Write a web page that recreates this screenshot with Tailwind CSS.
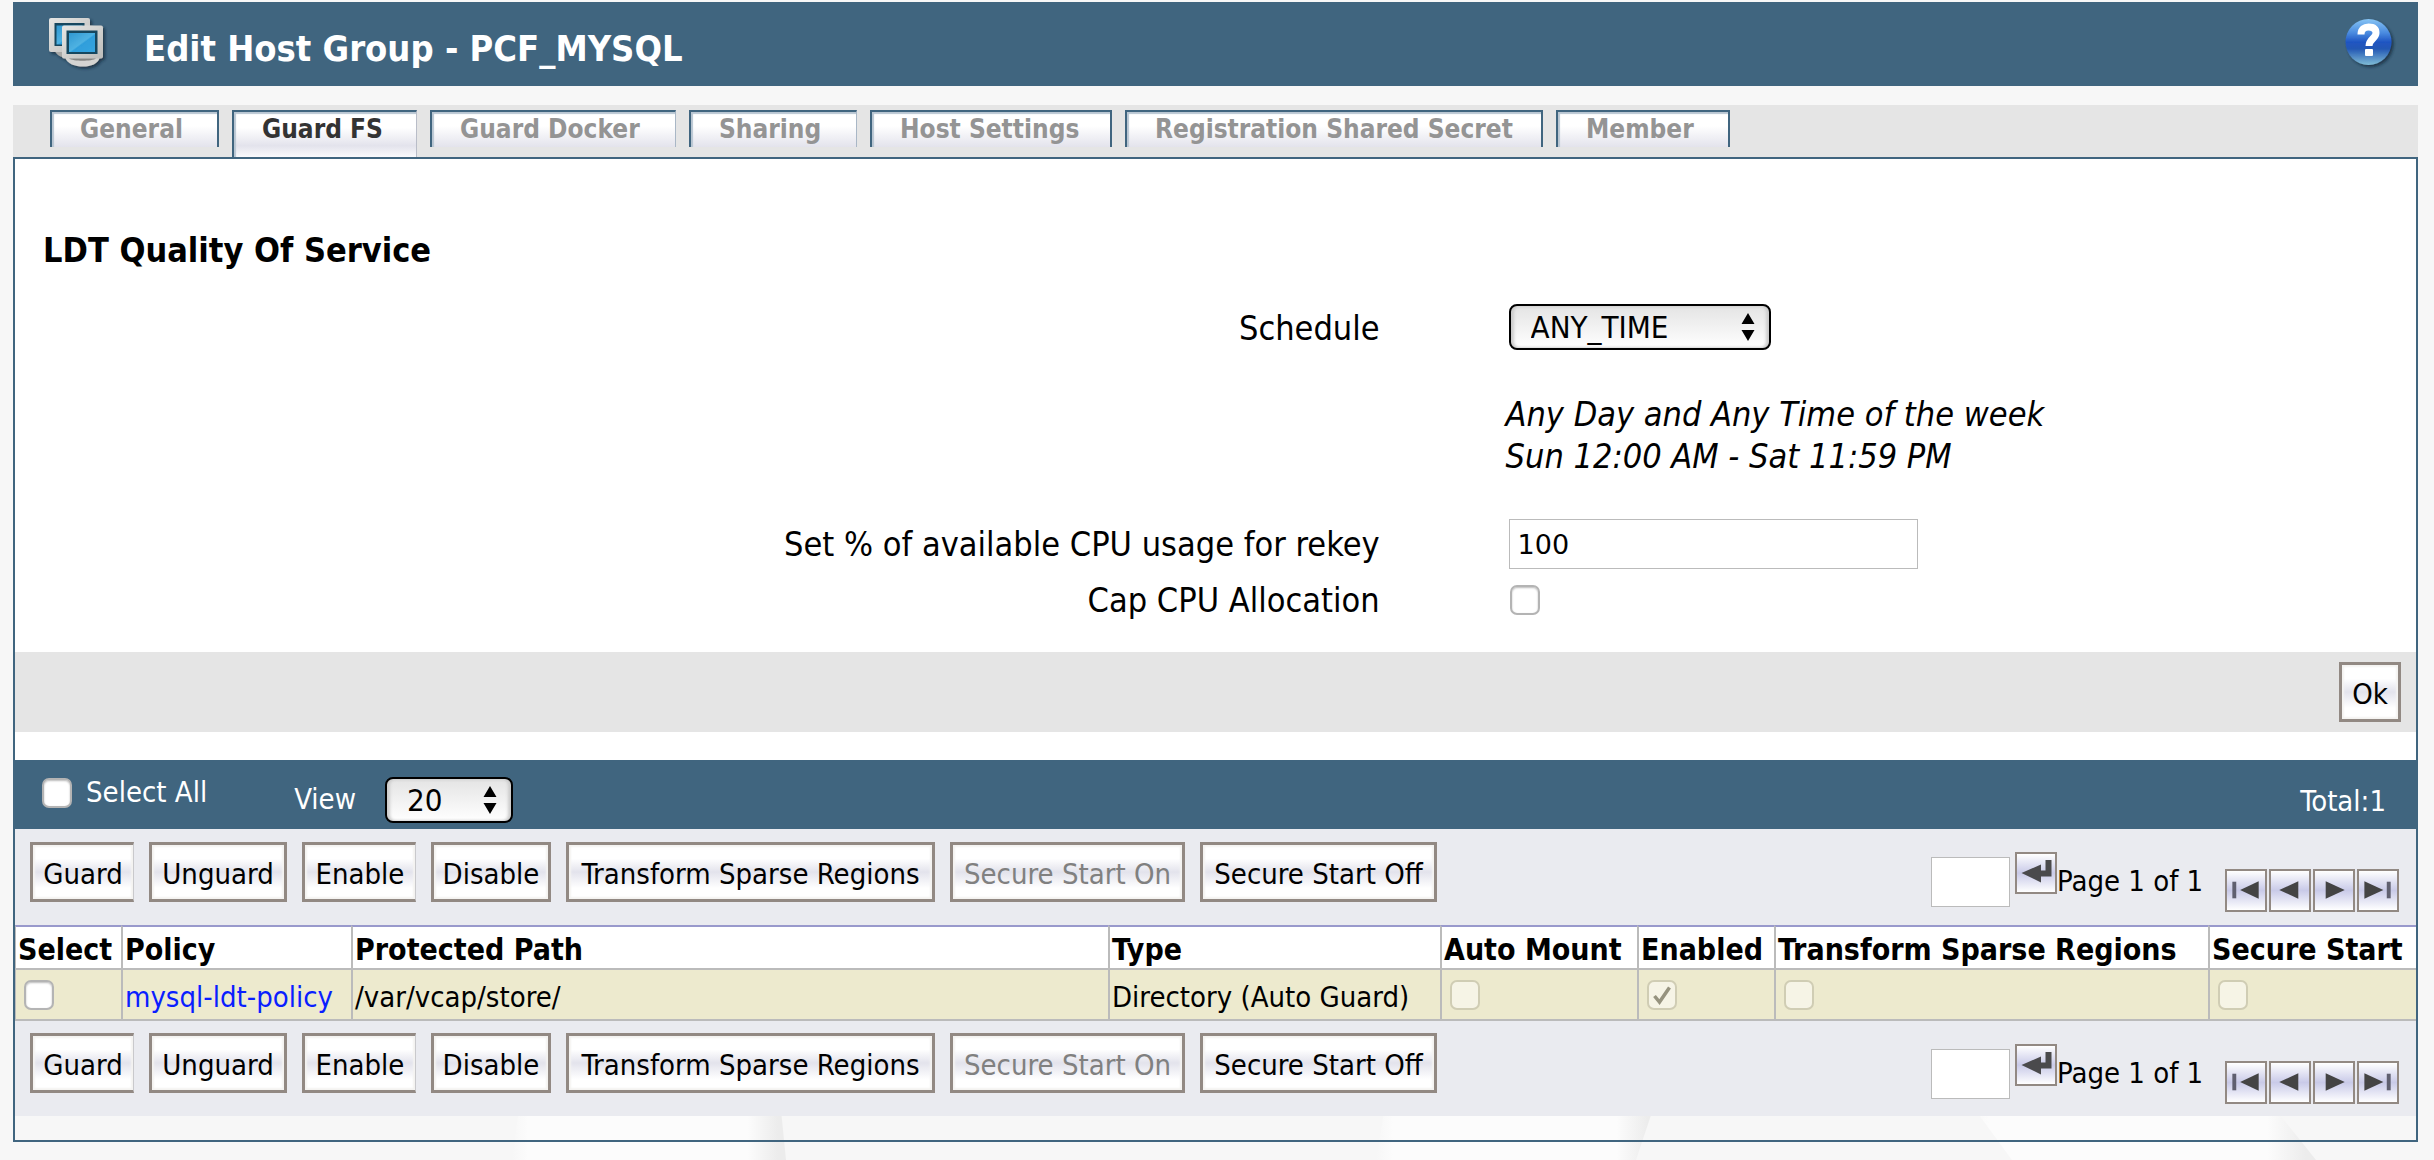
<!DOCTYPE html>
<html lang="en">
<head>
<meta charset="utf-8">
<title>Edit Host Group - PCF_MYSQL</title>
<script src="https://cdn.jsdelivr.net/npm/@tailwindcss/browser@4"></script>
</head>
<body class="relative min-h-screen overflow-x-hidden bg-[#f7f7f7] pt-[2px] pl-[13px] pr-4 font-['DejaVu_Sans_Condensed','DejaVu_Sans',sans-serif] text-[29px] text-black">

<!-- faint page backdrop -->
<svg class="absolute inset-x-0 top-0 -z-10 h-[1160px] w-full" viewBox="0 0 2434 1160" preserveAspectRatio="none" aria-hidden="true">
  <defs>
    <linearGradient id="sweep"><stop offset="0" stop-color="#f7f7f7"/><stop offset=".06" stop-color="#fcfcfc"/><stop offset=".86" stop-color="#fcfcfc"/><stop offset=".97" stop-color="#ececec"/><stop offset="1" stop-color="#ececec"/></linearGradient>
  </defs>
  <path d="M520 1100H780L786 1160H512Z" fill="url(#sweep)"/>
  <path d="M1386 1100H1656L1636 1160H1376Z" fill="url(#sweep)"/>
  <path d="M1968 1100H2268L2316 1160H2012Z" fill="url(#sweep)"/>
</svg>

<!-- shared icon shapes -->
<svg class="hidden" aria-hidden="true">
  <defs>
    <symbol id="i-enter" viewBox="0 0 38 38"><path d="M28.500 6H34.500V22.500H24V28.500L4.500 19L24 10.500V16.500H28.500Z" fill="#4a4a4c"/></symbol>
    <symbol id="i-first" viewBox="0 0 38 40"><path d="M5 11H9V28H5Z" fill="#606070"/><path d="M32 10.500V28.500L13 19.500Z" fill="#444"/></symbol>
    <symbol id="i-prev" viewBox="0 0 38 40"><path d="M27.500 10.500V28.500L8 19.500Z" fill="#444"/></symbol>
    <symbol id="i-next" viewBox="0 0 38 40"><path d="M10.500 10.500V28.500L30 19.500Z" fill="#444"/></symbol>
    <symbol id="i-last" viewBox="0 0 38 40"><path d="M5 10.500V28.500L24.500 19.500Z" fill="#444"/><path d="M28 11H32V28H28Z" fill="#606070"/></symbol>
    <symbol id="i-updown" viewBox="0 0 14 28"><path d="M7 0L13.500 11H.5ZM7 28L.5 17H13.500Z" fill="#000"/></symbol>
  </defs>
</svg>

<header class="flex h-[84px] items-start bg-[#40657f] text-white">
  <svg class="ml-[34px] mt-[13px] h-[60px] w-[64px] shrink-0" viewBox="0 0 64 60" aria-hidden="true">
    <defs>
      <linearGradient id="case" x1="0" y1="0" x2="1" y2="1"><stop offset="0" stop-color="#e6e6e4"/><stop offset="1" stop-color="#bcbcba"/></linearGradient>
      <linearGradient id="glass" x1="0" y1="0" x2="1" y2="1"><stop offset="0" stop-color="#2f98d2"/><stop offset=".5" stop-color="#4fb2e2"/><stop offset=".55" stop-color="#2f9edb"/><stop offset="1" stop-color="#36a5e0"/></linearGradient>
      <filter id="soft" x="-20%" y="-20%" width="150%" height="150%"><feDropShadow dx="2" dy="2" stdDeviation="1.500" flood-color="#0f2433" flood-opacity=".7"/></filter>
    </defs>
    <g filter="url(#soft)">
      <path d="M8 36C10 41 16 43 22 43H30V34H8Z" fill="#a9a9a7"/>
      <rect x="2" y="3" width="41" height="34" rx="2" fill="url(#case)"/>
      <rect x="7.500" y="8" width="30" height="23" fill="#14465f"/>
      <rect x="9.500" y="10.500" width="26" height="19" fill="url(#glass)"/>
      <path d="M18 42C20 49 28 51.500 36 51.500S51 49 53 42Z" fill="#d4d4d2"/>
      <rect x="15" y="10.500" width="41" height="33" rx="2" fill="url(#case)"/>
      <path d="M22 43.500H49C45 46.500 26 46.500 22 43.500Z" fill="#858583"/>
      <rect x="19.500" y="15.500" width="31" height="23.500" fill="#14465f"/>
      <rect x="22" y="18" width="26" height="19" fill="url(#glass)"/>
    </g>
  </svg>
  <h1 class="ml-[33px] mt-[26px] text-[36px] leading-[42px] font-bold">Edit Host Group - PCF_MYSQL</h1>
  <button type="button" aria-label="Help" class="ml-auto mr-[21px] mt-[14px] size-[54px]">
    <svg class="size-full" viewBox="0 0 54 54" aria-hidden="true">
      <defs>
        <linearGradient id="ball" x1="0" y1="0" x2="0" y2="1"><stop offset="0" stop-color="#86c4f4"/><stop offset=".3" stop-color="#4a8be0"/><stop offset=".5" stop-color="#1f55c2"/><stop offset=".65" stop-color="#2458b4"/><stop offset="1" stop-color="#7fbcd6"/></linearGradient>
      </defs>
      <g filter="url(#soft)"><circle cx="25.500" cy="26" r="23" fill="url(#ball)"/></g>
      <path d="M18 18.500C18 13 21.500 11 25.500 11C30.500 11 33 13 33 17C33 22.500 26 23 26 30" fill="none" stroke="#fff" stroke-width="7"/>
      <rect x="22" y="33" width="8" height="7" rx="1" fill="#fff"/>
    </svg>
  </button>
</header>

<nav aria-label="Host group sections" class="mt-[19px] flex h-[52px] items-start gap-[13px] bg-[#e5e5e5] pt-[5px] pl-[37px] text-[26px] leading-[34px] font-bold text-[#949494]">
  <a href="#general" class="h-[37px] w-[169px] border-2 border-b-0 border-[#40657f] bg-linear-to-b from-white from-40% to-[#e3e3ec] pl-7 shadow-[inset_2px_2px_1px_#b9c6d2]">General</a>
  <a href="#guard-fs" aria-current="page" class="h-[47px] w-[185px] border-2 border-r border-b-0 border-[#40657f] border-r-[#b9bdc8] bg-linear-to-b from-white from-35% via-[#e3e3ec] via-75% to-[#fafafc] pl-7 text-[#333] shadow-[inset_2px_2px_1px_#b9c6d2]">Guard FS</a>
  <a href="#guard-docker" class="h-[37px] w-[246px] border-2 border-r border-b-0 border-[#40657f] border-r-[#a9b7c6] bg-linear-to-b from-white from-40% to-[#e3e3ec] pl-7 shadow-[inset_2px_2px_1px_#b9c6d2]">Guard Docker</a>
  <a href="#sharing" class="h-[37px] w-[168px] border-2 border-r border-b-0 border-[#40657f] border-r-[#a9b7c6] bg-linear-to-b from-white from-40% to-[#e3e3ec] pl-7 shadow-[inset_2px_2px_1px_#b9c6d2]">Sharing</a>
  <a href="#host-settings" class="h-[37px] w-[242px] border-2 border-b-0 border-[#40657f] bg-linear-to-b from-white from-40% to-[#e3e3ec] pl-7 shadow-[inset_2px_2px_1px_#b9c6d2]">Host Settings</a>
  <a href="#shared-secret" class="h-[37px] w-[418px] border-2 border-b-0 border-[#40657f] bg-linear-to-b from-white from-40% to-[#e3e3ec] pl-7 shadow-[inset_2px_2px_1px_#b9c6d2]">Registration Shared Secret</a>
  <a href="#member" class="h-[37px] w-[174px] border-2 border-b-0 border-[#40657f] bg-linear-to-b from-white from-40% to-[#e3e3ec] pl-7 shadow-[inset_2px_2px_1px_#b9c6d2]">Member</a>
</nav>

<main class="border-2 border-[#40657f]">
  <form>
    <section class="bg-white pt-[71px] pb-[27px] text-[34px]">
      <h2 class="pl-7 leading-10 font-bold">LDT Quality Of Service</h2>
      <div class="mt-[34px] grid grid-cols-[57%_1fr]">
        <label for="schedule" class="pr-1 text-right leading-[48px]">Schedule</label>
        <div class="pl-[125px]">
          <div class="relative h-[46px] w-[262px]">
            <select id="schedule" class="block size-full appearance-none rounded-lg border-2 border-black bg-linear-to-b from-[#e4e4e4] to-white pl-5 text-[31px] leading-[40px] shadow-[inset_3px_0_3px_#ccc,inset_-3px_0_3px_#ccc]"><option>ANY_TIME</option></select>
            <svg class="pointer-events-none absolute top-[9px] right-4 h-7 w-[14px]" aria-hidden="true"><use href="#i-updown"/></svg>
          </div>
        </div>
        <p class="col-start-2 mt-[41px] pl-[122px] leading-[42px] italic">Any Day and Any Time of the week<br>Sun 12:00 AM - Sat 11:59 PM</p>
        <label for="cpu" class="mt-[42px] pr-1 text-right leading-[50px]">Set % of available CPU usage for rekey</label>
        <div class="mt-[42px] pl-[125px]">
          <input id="cpu" type="text" value="100" class="block h-[50px] w-[409px] border border-[#bbb] bg-white px-2 font-['DejaVu_Sans',sans-serif] text-[27px]">
        </div>
        <label for="cap" class="mt-[6px] pr-1 text-right leading-[50px]">Cap CPU Allocation</label>
        <div class="mt-[6px] flex items-center pl-[126px]">
          <input id="cap" type="checkbox" class="size-[30px] appearance-none rounded-[7px] border-2 border-[#b4b4b4] bg-white shadow-[inset_0_1px_2px_#bbb]">
        </div>
      </div>
    </section>
    <div class="flex h-20 items-center justify-end bg-[#e5e5e5] pr-[15px]">
      <button type="submit" class="h-[60px] w-[62px] border-3 border-[#928983] bg-linear-to-b from-white from-25% via-[#e3e3ec] via-50% to-white to-80% pt-1 leading-[50px] shadow-[inset_0_0_2px_2px_#f4f3f1]">Ok</button>
    </div>
  </form>

  <div class="h-7 bg-white"></div>

  <div class="flex h-[69px] items-start bg-[#40657f] text-white">
    <label class="ml-[27px] mt-[18px] flex h-[30px] items-center gap-[14px]">
      <input type="checkbox" class="size-[30px] appearance-none rounded-[7px] border-2 border-[#b4b4b4] bg-white shadow-[inset_0_1px_2px_#bbb]">
      <span>Select All</span>
    </label>
    <label for="view" class="ml-[87px] mt-4 leading-[46px]">View</label>
    <div class="relative mt-[17px] ml-[29px] h-[46px] w-32 text-black">
      <select id="view" class="block size-full appearance-none rounded-lg border-2 border-black bg-linear-to-b from-[#e4e4e4] to-white pl-5 text-[31px] leading-[40px] shadow-[inset_3px_0_3px_#ccc,inset_-3px_0_3px_#ccc]"><option>20</option></select>
      <svg class="pointer-events-none absolute top-[9px] right-4 h-7 w-[14px]" aria-hidden="true"><use href="#i-updown"/></svg>
    </div>
    <span class="ml-auto mt-[18px] mr-[30px] leading-[46px]">Total:1</span>
  </div>

  <div class="flex h-24 items-start bg-[#eaebf0] pr-[17px] pl-[15px]">
    <div class="mt-[13px] flex gap-[15px]">
      <button type="button" class="h-[60px] w-[104px] border-3 border-r border-[#928983] border-r-[#c9c9cc] bg-linear-to-b from-white from-25% via-[#e3e3ec] via-50% to-white to-80% pt-1 leading-[50px] shadow-[inset_0_0_2px_2px_#f4f3f1]">Guard</button>
      <button type="button" class="h-[60px] w-[138px] border-3 border-[#928983] bg-linear-to-b from-white from-25% via-[#e3e3ec] via-50% to-white to-80% pt-1 leading-[50px] shadow-[inset_0_0_2px_2px_#f4f3f1]">Unguard</button>
      <button type="button" class="h-[60px] w-[114px] border-3 border-r border-[#928983] border-r-[#c9c9cc] bg-linear-to-b from-white from-25% via-[#e3e3ec] via-50% to-white to-80% pt-1 leading-[50px] shadow-[inset_0_0_2px_2px_#f4f3f1]">Enable</button>
      <button type="button" class="h-[60px] w-[120px] border-3 border-[#928983] bg-linear-to-b from-white from-25% via-[#e3e3ec] via-50% to-white to-80% pt-1 leading-[50px] shadow-[inset_0_0_2px_2px_#f4f3f1]">Disable</button>
      <button type="button" class="h-[60px] w-[369px] border-3 border-[#928983] bg-linear-to-b from-white from-25% via-[#e3e3ec] via-50% to-white to-80% pt-1 leading-[50px] shadow-[inset_0_0_2px_2px_#f4f3f1]">Transform Sparse Regions</button>
      <button type="button" disabled class="h-[60px] w-[235px] border-3 border-[#928983] bg-linear-to-b from-white from-25% via-[#e3e3ec] via-50% to-white to-80% pt-1 leading-[50px] text-[#808080] shadow-[inset_0_0_2px_2px_#f4f3f1]">Secure Start On</button>
      <button type="button" class="h-[60px] w-[237px] border-3 border-[#928983] bg-linear-to-b from-white from-25% via-[#e3e3ec] via-50% to-white to-80% pt-1 leading-[50px] shadow-[inset_0_0_2px_2px_#f4f3f1]">Secure Start Off</button>
    </div>
    <div class="ml-auto flex items-start">
      <input type="text" aria-label="Go to page" class="mt-7 h-[50px] w-[79px] border border-[#bbb] bg-white px-2">
      <button type="button" aria-label="Go" class="mt-[23px] ml-[5px] size-[42px] border-2 border-[#928983] bg-linear-to-b from-white via-[#c9cae8] to-white"><svg class="size-full"><use href="#i-enter"/></svg></button>
      <span class="mt-[31px] w-[148px] leading-[42px]">Page 1 of 1</span>
      <div class="mt-10 ml-[20px] flex gap-[2px]">
        <button type="button" aria-label="First page" class="h-[43px] w-[42px] border-2 border-[#928983] bg-linear-to-b from-white via-[#c9cae8] to-white"><svg class="size-full"><use href="#i-first"/></svg></button>
        <button type="button" aria-label="Previous page" class="h-[43px] w-[42px] border-2 border-[#928983] bg-linear-to-b from-white via-[#c9cae8] to-white"><svg class="size-full"><use href="#i-prev"/></svg></button>
        <button type="button" aria-label="Next page" class="h-[43px] w-[42px] border-2 border-[#928983] bg-linear-to-b from-white via-[#c9cae8] to-white"><svg class="size-full"><use href="#i-next"/></svg></button>
        <button type="button" aria-label="Last page" class="h-[43px] w-[42px] border-2 border-[#928983] bg-linear-to-b from-white via-[#c9cae8] to-white"><svg class="size-full"><use href="#i-last"/></svg></button>
      </div>
    </div>
  </div>

  <table class="w-full table-fixed border-separate border-spacing-0 text-left">
    <colgroup>
      <col class="w-[106px]"><col class="w-[230px]"><col><col class="w-[332px]"><col class="w-[197px]"><col class="w-[137px]"><col class="w-[434px]"><col class="w-[208px]">
    </colgroup>
    <thead>
      <tr class="h-[45px] bg-white text-[30px] leading-[35px] whitespace-nowrap">
        <th class="border-y-2 border-l border-[#bbb] border-t-[#9999cc] p-0 pt-1 pl-[2px]">Select</th>
        <th class="border-y-2 border-l-2 border-[#bbb] border-t-[#9999cc] p-0 pt-1 pl-[2px]">Policy</th>
        <th class="border-y-2 border-l-2 border-[#bbb] border-t-[#9999cc] p-0 pt-1 pl-[2px]">Protected Path</th>
        <th class="border-y-2 border-l-2 border-[#bbb] border-t-[#9999cc] p-0 pt-1 pl-[2px]">Type</th>
        <th class="border-y-2 border-l-2 border-[#bbb] border-t-[#9999cc] p-0 pt-1 pl-[2px]">Auto Mount</th>
        <th class="border-y-2 border-l-2 border-[#bbb] border-t-[#9999cc] p-0 pt-1 pl-[2px]">Enabled</th>
        <th class="border-y-2 border-l-2 border-[#bbb] border-t-[#9999cc] p-0 pt-1 pl-[2px]">Transform Sparse Regions</th>
        <th class="border-y-2 border-l-2 border-[#bbb] border-t-[#9999cc] p-0 pt-1 pl-[2px]">Secure Start</th>
      </tr>
    </thead>
    <tbody>
      <tr class="h-[51px] bg-[#edeace] leading-10">
        <td class="border-b-2 border-l border-[#bbb] p-0 pl-2"><input type="checkbox" aria-label="Select mysql-ldt-policy" class="block size-[30px] appearance-none rounded-[7px] border-2 border-[#b4b4b4] bg-white shadow-[inset_0_1px_2px_#bbb]"></td>
        <td class="border-b-2 border-l-2 border-[#bbb] p-0 pt-1 pl-[2px]"><a href="#policy" class="text-[#0a1eff]">mysql-ldt-policy</a></td>
        <td class="border-b-2 border-l-2 border-[#bbb] p-0 pt-1 pl-[2px]">/var/vcap/store/</td>
        <td class="border-b-2 border-l-2 border-[#bbb] p-0 pt-1 pl-[2px]">Directory (Auto Guard)</td>
        <td class="border-b-2 border-l-2 border-[#bbb] p-0 pl-2"><input type="checkbox" disabled aria-label="Auto Mount" class="block size-[30px] appearance-none rounded-[7px] border-2 border-[#d0cdb4] bg-[#f6f4e6]"></td>
        <td class="border-b-2 border-l-2 border-[#bbb] p-0 pl-2">
          <span class="relative block size-[30px]">
            <input type="checkbox" checked disabled aria-label="Enabled" class="block size-full appearance-none rounded-[7px] border-2 border-[#d0cdb4] bg-[#f6f4e6]">
            <svg class="pointer-events-none absolute inset-0 size-full" viewBox="0 0 30 30" aria-hidden="true"><path d="M7.500 16L12.500 22L22.500 7.500" fill="none" stroke="#96937f" stroke-width="3.500"/></svg>
          </span>
        </td>
        <td class="border-b-2 border-l-2 border-[#bbb] p-0 pl-2"><input type="checkbox" disabled aria-label="Transform Sparse Regions" class="block size-[30px] appearance-none rounded-[7px] border-2 border-[#d0cdb4] bg-[#f6f4e6]"></td>
        <td class="border-b-2 border-l-2 border-[#bbb] p-0 pl-2"><input type="checkbox" disabled aria-label="Secure Start" class="block size-[30px] appearance-none rounded-[7px] border-2 border-[#d0cdb4] bg-[#f6f4e6]"></td>
      </tr>
    </tbody>
  </table>

  <div class="flex h-[95px] items-start bg-[#eaebf0] pr-[17px] pl-[15px]">
    <div class="mt-3 flex gap-[15px]">
      <button type="button" class="h-[60px] w-[104px] border-3 border-r border-[#928983] border-r-[#c9c9cc] bg-linear-to-b from-white from-25% via-[#e3e3ec] via-50% to-white to-80% pt-1 leading-[50px] shadow-[inset_0_0_2px_2px_#f4f3f1]">Guard</button>
      <button type="button" class="h-[60px] w-[138px] border-3 border-[#928983] bg-linear-to-b from-white from-25% via-[#e3e3ec] via-50% to-white to-80% pt-1 leading-[50px] shadow-[inset_0_0_2px_2px_#f4f3f1]">Unguard</button>
      <button type="button" class="h-[60px] w-[114px] border-3 border-r border-[#928983] border-r-[#c9c9cc] bg-linear-to-b from-white from-25% via-[#e3e3ec] via-50% to-white to-80% pt-1 leading-[50px] shadow-[inset_0_0_2px_2px_#f4f3f1]">Enable</button>
      <button type="button" class="h-[60px] w-[120px] border-3 border-[#928983] bg-linear-to-b from-white from-25% via-[#e3e3ec] via-50% to-white to-80% pt-1 leading-[50px] shadow-[inset_0_0_2px_2px_#f4f3f1]">Disable</button>
      <button type="button" class="h-[60px] w-[369px] border-3 border-[#928983] bg-linear-to-b from-white from-25% via-[#e3e3ec] via-50% to-white to-80% pt-1 leading-[50px] shadow-[inset_0_0_2px_2px_#f4f3f1]">Transform Sparse Regions</button>
      <button type="button" disabled class="h-[60px] w-[235px] border-3 border-[#928983] bg-linear-to-b from-white from-25% via-[#e3e3ec] via-50% to-white to-80% pt-1 leading-[50px] text-[#808080] shadow-[inset_0_0_2px_2px_#f4f3f1]">Secure Start On</button>
      <button type="button" class="h-[60px] w-[237px] border-3 border-[#928983] bg-linear-to-b from-white from-25% via-[#e3e3ec] via-50% to-white to-80% pt-1 leading-[50px] shadow-[inset_0_0_2px_2px_#f4f3f1]">Secure Start Off</button>
    </div>
    <div class="ml-auto flex items-start">
      <input type="text" aria-label="Go to page" class="mt-7 h-[50px] w-[79px] border border-[#bbb] bg-white px-2">
      <button type="button" aria-label="Go" class="mt-[23px] ml-[5px] size-[42px] border-2 border-[#928983] bg-linear-to-b from-white via-[#c9cae8] to-white"><svg class="size-full"><use href="#i-enter"/></svg></button>
      <span class="mt-[31px] w-[148px] leading-[42px]">Page 1 of 1</span>
      <div class="mt-10 ml-[20px] flex gap-[2px]">
        <button type="button" aria-label="First page" class="h-[43px] w-[42px] border-2 border-[#928983] bg-linear-to-b from-white via-[#c9cae8] to-white"><svg class="size-full"><use href="#i-first"/></svg></button>
        <button type="button" aria-label="Previous page" class="h-[43px] w-[42px] border-2 border-[#928983] bg-linear-to-b from-white via-[#c9cae8] to-white"><svg class="size-full"><use href="#i-prev"/></svg></button>
        <button type="button" aria-label="Next page" class="h-[43px] w-[42px] border-2 border-[#928983] bg-linear-to-b from-white via-[#c9cae8] to-white"><svg class="size-full"><use href="#i-next"/></svg></button>
        <button type="button" aria-label="Last page" class="h-[43px] w-[42px] border-2 border-[#928983] bg-linear-to-b from-white via-[#c9cae8] to-white"><svg class="size-full"><use href="#i-last"/></svg></button>
      </div>
    </div>
  </div>
  <div class="h-6"></div>
</main>
</body>
</html>
